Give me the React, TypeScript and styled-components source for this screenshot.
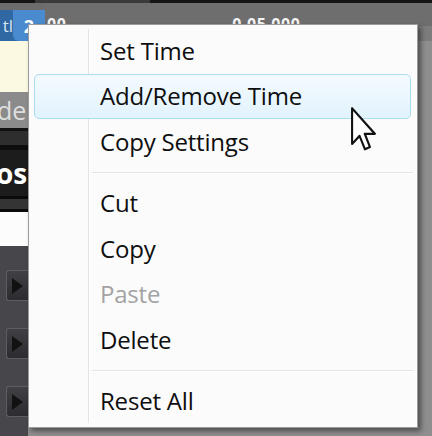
import React from 'react';
import styled, { createGlobalStyle } from 'styled-components';

const GlobalStyle = createGlobalStyle`
  html, body {
    margin: 0;
    padding: 0;
    background: #8a8a8a;
    overflow: hidden;
  }
  * {
    box-sizing: border-box;
  }
`;

const Screen = styled.div`
  position: relative;
  width: 432px;
  height: 436px;
  display: flex;
  flex-direction: column;
  background: #858585;
  overflow: hidden;
  font-family: 'Open Sans', 'Liberation Sans', sans-serif;
`;

const TopEdge = styled.div`
  height: 3px;
  flex-shrink: 0;
  background: linear-gradient(to right, #151515 0 35px, #3a3a3a 35px 150px, #151515 150px);
`;

const Upper = styled.div`
  display: flex;
  height: 38px;
  flex-shrink: 0;
`;

const TabColumn = styled.div`
  width: 45px;
  display: flex;
  flex-direction: column;
`;

const TabGap = styled.div`
  height: 7px;
  background: #6c6c6c;
`;

const ClipTab = styled.div`
  flex: 1;
  display: flex;
  align-items: stretch;
  background: #2f68a3;
`;

const TabLabel = styled.span`
  width: 13px;
  display: flex;
  align-items: center;
  justify-content: flex-end;
  color: #d9e6f3;
  font-size: 17px;
  overflow: hidden;
  white-space: nowrap;
`;

const Badge = styled.span`
  flex: 1;
  display: flex;
  align-items: center;
  justify-content: center;
  background: #4a8bd0;
  color: #fff;
  font-size: 18px;
  font-weight: 700;
  border-bottom-left-radius: 6px;
`;

const HeaderArea = styled.div`
  flex: 1;
  display: flex;
  flex-direction: column;
`;

const TimeBar = styled.div`
  height: 23px;
  display: flex;
  align-items: flex-end;
  background: #6e6e6e;
  color: #f4f4f4;
  font-size: 16px;
  font-weight: 700;
  line-height: 1;
`;

const TimeText = styled.span<{ indent: number }>`
  margin-left: ${p => p.indent}px;
  letter-spacing: 0.5px;
  transform: translateY(6px);
`;

const HeaderBelow = styled.div`
  flex: 1;
  background: #7c7c7c;
`;

const Lower = styled.div`
  flex: 1;
  display: flex;
`;

const LeftStrip = styled.div`
  width: 28px;
  display: flex;
  flex-direction: column;
  overflow: hidden;
`;

const Segment = styled.div<{ h: number; bg: string }>`
  height: ${p => p.h}px;
  flex-shrink: 0;
  background: ${p => p.bg};
  display: flex;
  align-items: center;
  white-space: nowrap;
  overflow: hidden;
`;

const TrackName = styled.span`
  color: #dedede;
  font-size: 25px;
  margin-left: -3px;
`;

const TrackTitle = styled.span`
  color: #fff;
  font-size: 28px;
  font-weight: 700;
  margin-left: -4px;
`;

const ButtonPanel = styled.div`
  flex: 1;
  background: #47474b;
  display: flex;
  flex-direction: column;
  padding: 24px 0 0 6px;
  gap: 27px;
`;

const PlayButton = styled.div`
  width: 28px;
  height: 31px;
  border: 1px solid #5e5e62;
  border-right: none;
  border-radius: 3px 0 0 3px;
  background: linear-gradient(#414145, #2c2c30);
  display: flex;
  align-items: center;
  padding-left: 5px;
  &::after {
    content: '';
    border-top: 8px solid transparent;
    border-bottom: 8px solid transparent;
    border-left: 11px solid #111;
  }
`;

const Backdrop = styled.div`
  flex: 1;
  background: #8e8e8e;
`;

const Menu = styled.div`
  position: absolute;
  left: 28px;
  top: 24px;
  width: 390px;
  height: 404px;
  background: #fbfbfb;
  border: 1px solid #9c9c9c;
  box-shadow: 3px 3px 5px rgba(0, 0, 0, 0.45);
  padding: 3px 6px 4px 5px;
  display: flex;
  flex-direction: column;
  &::before {
    content: '';
    position: absolute;
    left: 59px;
    top: 4px;
    bottom: 4px;
    width: 1px;
    background: #e3e3e3;
    box-shadow: 1px 0 0 #ffffff;
  }
`;

const Item = styled.div<{ active?: boolean; disabled?: boolean }>`
  position: relative;
  height: 45.5px;
  flex-shrink: 0;
  display: flex;
  align-items: center;
  padding-left: 65px;
  padding-bottom: 1px;
  font-size: 24px;
  letter-spacing: -0.2px;
  color: ${p => (p.disabled ? '#a3a3a3' : '#0e0e0e')};
  border: 1px solid ${p => (p.active ? '#acdcf1' : 'transparent')};
  border-radius: 5px;
  background: ${p => (p.active ? 'linear-gradient(#f3fafe, #e2f3fc)' : 'transparent')};
`;

const Separator = styled.div`
  height: 16px;
  flex-shrink: 0;
  display: flex;
  align-items: center;
  margin-left: 58px;
  margin-right: -2px;
  &::after {
    content: '';
    flex: 1;
    height: 1px;
    background: #e4e4e4;
    box-shadow: 0 1px 0 #ffffff;
  }
`;

const Cursor = styled.svg`
  position: absolute;
  left: 350px;
  top: 106px;
`;

type Entry = { label: string; active?: boolean; disabled?: boolean } | 'sep';

const entries: Entry[] = [
  { label: 'Set Time' },
  { label: 'Add/Remove Time', active: true },
  { label: 'Copy Settings' },
  'sep',
  { label: 'Cut' },
  { label: 'Copy' },
  { label: 'Paste', disabled: true },
  { label: 'Delete' },
  'sep',
  { label: 'Reset All' },
];

export default function App() {
  return (
    <>
      <GlobalStyle />
      <Screen>
        <TopEdge />
        <Upper>
          <TabColumn>
            <TabGap />
            <ClipTab>
              <TabLabel>tl</TabLabel>
              <Badge>2</Badge>
            </ClipTab>
          </TabColumn>
          <HeaderArea>
            <TimeBar>
              <TimeText indent={2}>00</TimeText>
              <TimeText indent={166}>0.05.000</TimeText>
            </TimeBar>
            <HeaderBelow />
          </HeaderArea>
        </Upper>
        <Lower>
          <LeftStrip>
            <Segment h={51} bg="#fcf9e2" />
            <Segment h={36} bg="#8b8b8b">
              <TrackName>de *</TrackName>
            </Segment>
            <Segment h={3} bg="#111" />
            <Segment h={14} bg="#2e2e2e" />
            <Segment h={5} bg="#0d0d0d" />
            <Segment h={46} bg="#1c1c1c">
              <TrackTitle>os</TrackTitle>
            </Segment>
            <Segment h={3} bg="#0b0b0b" />
            <Segment h={10} bg="#343434" />
            <Segment h={3} bg="#0b0b0b" />
            <Segment h={34} bg="#fcfcfc" />
            <ButtonPanel>
              <PlayButton />
              <PlayButton />
              <PlayButton />
            </ButtonPanel>
          </LeftStrip>
          <Backdrop />
        </Lower>

        <Menu>
          {entries.map((e, i) =>
            e === 'sep' ? (
              <Separator key={i} />
            ) : (
              <Item key={i} active={e.active} disabled={e.disabled}>
                {e.label}
              </Item>
            )
          )}
        </Menu>

        <Cursor width="27" height="46" viewBox="0 0 13 20" preserveAspectRatio="none">
          <path
            d="M1 1 L1 16.5 L4.6 13 L7.2 18.8 L9.6 17.8 L7.1 12.1 L12 12.1 Z"
            fill="#fff"
            stroke="#111"
            strokeWidth="1"
            strokeLinejoin="round"
          />
        </Cursor>
      </Screen>
    </>
  );
}
